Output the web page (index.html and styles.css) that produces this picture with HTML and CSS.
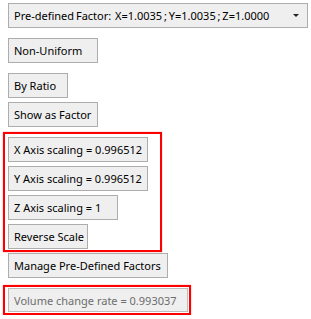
FILE: index.html
```
<!DOCTYPE html>
<html lang="en">
<head>
    <meta charset="UTF-8">
    <meta name="viewport" content="width=device-width, initial-scale=1.0">
    <title>Scale Options</title>
    <link rel="stylesheet" href="styles.css">
</head>
<body>
    <div id="panel">
        <div class="combo">
            <span class="combo-text">Pre-defined Factor:&nbsp; X=1.0035 ; Y=1.0035 ; Z=1.0000</span>
            <span class="combo-arrow"></span>
        </div>
        <button class="btn w90 mt10">Non-Uniform</button>
        <button class="btn w60 mt10">By Ratio</button>
        <button class="btn w90 mt4">Show as Factor</button>
        <div class="marked axis-group">
            <button class="btn w140">X Axis scaling = 0.996512</button>
            <button class="btn w140">Y Axis scaling = 0.996512</button>
            <button class="btn w110">Z Axis scaling = 1</button>
            <button class="btn w80">Reverse Scale</button>
        </div>
        <button class="btn w160">Manage Pre-Defined Factors</button>
        <div class="marked volume">
            <button class="btn w180 disabled" disabled>Volume change rate = 0.993037</button>
        </div>
    </div>
</body>
</html>
```

FILE: styles.css
```
body {
    margin: 0;
    padding: 0;
    background-color: #fff;
    font-family: "Noto Sans", sans-serif;
    font-size: 11px;
    color: #000;
}
#panel {
    display: flex;
    flex-direction: column;
    align-items: flex-start;
    padding: 3px 0 0 8px;
}
.combo {
    box-sizing: border-box;
    width: 300px;
    height: 25px;
    display: flex;
    align-items: center;
    justify-content: space-between;
    padding: 0 8px 0 5px;
    background-color: #efefef;
    border: 1px solid #adadad;
    white-space: nowrap;
}
.combo-text {
    word-spacing: -1px;
}
.combo-arrow {
    width: 0;
    height: 0;
    border-left: 3px solid transparent;
    border-right: 3px solid transparent;
    border-top: 3px solid #222;
}
.btn {
    box-sizing: border-box;
    height: 25px;
    margin: 0;
    padding: 0 5px;
    text-align: left;
    font-family: inherit;
    font-size: 11px;
    color: #000;
    background-color: #efefef;
    border: 1px solid #adadad;
    border-radius: 0;
    white-space: nowrap;
}
.w60 { width: 60px; }
.w80 { width: 80px; }
.w90 { width: 90px; }
.w110 { width: 110px; }
.w140 { width: 140px; }
.w160 { width: 160px; }
.w180 { width: 180px; height: 24px; }
.mt10 { margin-top: 10px; }
.mt4 { margin-top: 4px; }
.marked {
    box-sizing: border-box;
    display: flex;
    flex-direction: column;
    align-items: flex-start;
    gap: 4px;
    margin-left: -5px;
    border: 2px solid #f00;
    box-shadow: 0 0 1px rgba(255, 0, 0, 0.6);
}
.axis-group {
    width: 159px;
    margin-top: 5px;
    margin-bottom: 1px;
    padding: 3px 0 1px 3px;
}
.volume {
    width: 188px;
    margin-top: 7px;
    padding: 1px 1px 1px 3px;
}
.disabled {
    color: #6d6d6d;
    border-color: #bcbcbc;
}
```
